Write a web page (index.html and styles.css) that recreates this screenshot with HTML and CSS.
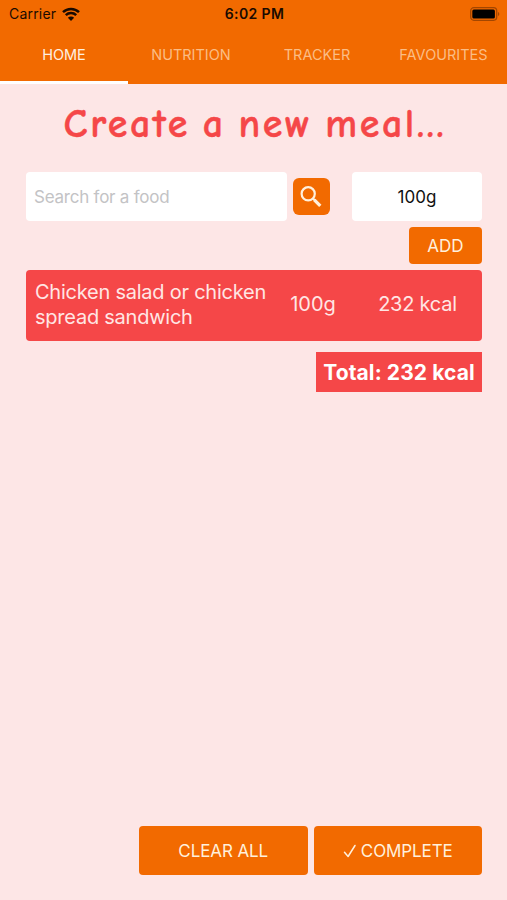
FILE: index.html
```
<!DOCTYPE html>
<html lang="en">
<head>
  <meta charset="UTF-8">
  <meta name="viewport" content="width=device-width, initial-scale=1.0">
  <title>Create a new meal</title>
  <link rel="stylesheet" href="styles.css">
</head>
<body>
  <header class="header">
    <div class="status-bar">
      <div class="carrier">
        <span>Carrier</span>
        <svg class="wifi" viewBox="0 0 18 14">
          <path d="M1 5.2a11.5 11.5 0 0 1 16 0M3.8 8.2a7.5 7.5 0 0 1 10.4 0" fill="none" stroke="#1a0a00" stroke-width="2.5"/>
          <path d="M9 14L5.9 10.8a4.4 4.4 0 0 1 6.2 0z" fill="#1a0a00"/>
        </svg>
      </div>
      <div class="time">6:02 PM</div>
      <svg class="battery" viewBox="0 0 30 14">
        <rect x="0.7" y="0.7" width="26" height="12.6" rx="3.2" fill="none" stroke="#a34600" stroke-width="1.3"/>
        <rect x="2.3" y="2.4" width="22.6" height="9.2" rx="1.5" fill="#000"/>
        <path d="M28 5v4c1.8-.6 1.8-3.4 0-4z" fill="#a34600"/>
      </svg>
    </div>
    <nav class="tabs">
      <a class="tab active">HOME</a>
      <a class="tab">NUTRITION</a>
      <a class="tab">TRACKER</a>
      <a class="tab">FAVOURITES</a>
    </nav>
  </header>

  <main class="content">
    <h1 class="title">Create a new meal...</h1>

    <form class="search-row">
      <input class="field search" type="text" placeholder="Search for a food">
      <button class="btn search-btn" type="button" aria-label="Search">
        <svg viewBox="0 0 37 37" fill="none" stroke="#fff0dc">
          <circle cx="15.2" cy="15.8" r="6.6" stroke-width="2.2"/>
          <path d="M20 20.5l2 2" stroke-width="2.2"/>
          <path d="M21.3 21.8l6 6" stroke-width="3.3"/>
        </svg>
      </button>
      <input class="field amount" type="text" value="100g">
    </form>
    <button class="btn add-btn" type="button">ADD</button>

    <div class="food-row">
      <span class="food-name">Chicken salad or chicken spread sandwich</span>
      <span class="food-amount">100g</span>
      <span class="food-kcal">232 kcal</span>
    </div>
    <div class="total">Total: 232 kcal</div>

    <div class="actions">
      <button class="btn action" type="button">CLEAR ALL</button>
      <button class="btn action" type="button">
        <svg class="check" viewBox="0 0 14 14"><path d="M1.5 8.3l3.6 4.2L12 1.5" fill="none" stroke="#fff0dc" stroke-width="1.5" stroke-linecap="round" stroke-linejoin="round"/></svg>
        <span>COMPLETE</span>
      </button>
    </div>
  </main>
</body>
</html>
```
FILE: styles.css
```
* {
  box-sizing: border-box;
}
body {
  margin: 0;
  height: 900px;
  display: flex;
  flex-direction: column;
  background: #fde6e6;
  font-family: Inter, "Liberation Sans", sans-serif;
}
.header {
  height: 84px;
  background: #f26a00;
}
.status-bar {
  height: 28px;
  padding: 0 7px 1px 9px;
  display: grid;
  grid-template-columns: 1fr auto 1fr;
  align-items: center;
  font-size: 14px;
  color: #1a0a00;
}
.carrier {
  display: flex;
  align-items: center;
  gap: 6px;
  letter-spacing: 0.2px;
}
.wifi {
  width: 18px;
  height: 14px;
}
.time {
  font-weight: 600;
  letter-spacing: 0.4px;
}
.battery {
  width: 30px;
  height: 14px;
  justify-self: end;
}
.tabs {
  height: 56px;
  display: grid;
  grid-template-columns: 128px 126px 126px 127px;
}
.tab {
  border-bottom: 3px solid transparent;
  display: flex;
  align-items: center;
  justify-content: center;
  font-size: 14.5px;
  color: #fbbd85;
}
.tab.active {
  color: #fff0e0;
  border-bottom-color: #fff;
}
.content {
  flex: 1;
  padding: 0 25px 25px 26px;
  display: flex;
  flex-direction: column;
}
.title {
  height: 88px;
  margin: 0;
  padding: 14px 0 0 2px;
  text-align: center;
  white-space: nowrap;
  font-family: "Comic Neue", "Comic Sans MS", Lato, cursive;
  font-size: 40px;
  line-height: 52px;
  font-weight: 600;
  letter-spacing: 2.6px;
  word-spacing: -4px;
  -webkit-text-stroke: 0.4px #f54748;
  color: #f54748;
}
.search-row {
  display: flex;
  align-items: center;
}
.field {
  height: 49px;
  border: none;
  border-radius: 4px;
  background: #fff;
  font-family: inherit;
  font-size: 17px;
  color: #111;
}
.search {
  width: 261px;
  padding: 0 8px;
  letter-spacing: -0.23px;
}
.search::placeholder {
  color: #c3c3c5;
}
.amount {
  width: 130px;
  margin-left: auto;
  padding: 0;
  text-align: center;
}
.btn {
  padding: 0;
  border: none;
  border-radius: 4px;
  background: #f26a00;
  font-family: inherit;
  font-size: 17px;
  color: #fff0dc;
}
.search-btn {
  width: 37px;
  height: 37px;
  margin-left: 6px;
  border-radius: 6px;
}
.search-btn svg {
  display: block;
}
.add-btn {
  align-self: flex-end;
  width: 73px;
  height: 37px;
  margin: 6px 0;
}
.food-row {
  height: 71px;
  padding: 0 0 2px 9px;
  display: grid;
  grid-template-columns: 238px 80px 129px;
  align-items: center;
  border-radius: 4px;
  background: #f54748;
  font-size: 20px;
  line-height: 25px;
  letter-spacing: -0.24px;
  color: #ffe6e4;
}
.food-amount,
.food-kcal {
  text-align: center;
}
.food-amount {
  letter-spacing: 0;
}
.total {
  align-self: flex-end;
  width: 166px;
  height: 40px;
  margin-top: 11px;
  background: #f54748;
  font-size: 21px;
  font-weight: 700;
  line-height: 41px;
  letter-spacing: 0.1px;
  text-align: center;
  white-space: nowrap;
  color: #fff;
}
.actions {
  margin-top: auto;
  display: flex;
  justify-content: flex-end;
  gap: 6px;
}
.action {
  width: 168.5px;
  height: 49px;
  display: flex;
  align-items: center;
  justify-content: center;
  gap: 4px;
  letter-spacing: -0.1px;
}
.check {
  width: 14px;
  height: 14px;
}
```
